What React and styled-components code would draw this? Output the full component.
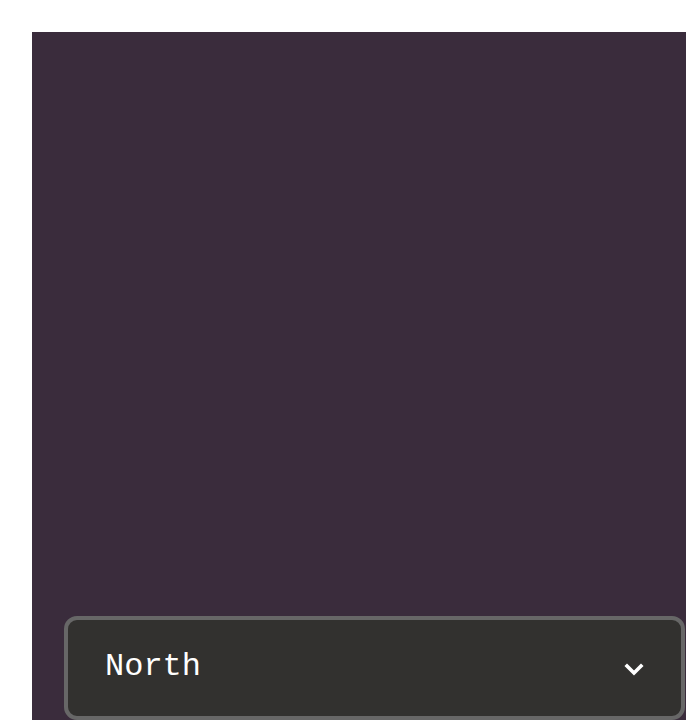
import React from "react";
import styled, { createGlobalStyle } from "styled-components";

const GlobalStyle = createGlobalStyle`
  html, body {
    margin: 0;
    padding: 0;
    background: #fff;
    overflow: hidden;
  }
`;

const Page = styled.div`
  padding: 32px 0 0 32px;
  width: 686px;
  height: 720px;
  box-sizing: border-box;
  overflow: hidden;
`;

const Panel = styled.div`
  width: 685px;
  height: 720px;
  box-sizing: border-box;
  padding: 32px;
  background: #3a2c3c;
  display: flex;
  flex-direction: column;
  justify-content: flex-end;
`;

const SelectBox = styled.div`
  height: 104px;
  box-sizing: border-box;
  border: 4px solid #676767;
  border-radius: 13px;
  background: #32312f;
  display: flex;
  align-items: center;
  justify-content: space-between;
  padding: 0 37px 0 37px;
  color: #fff;
  font-family: "Liberation Mono", "DejaVu Sans Mono", monospace;
  font-size: 32px;
  cursor: pointer;
`;

const Label = styled.span`
  line-height: 1;
  margin-top: -2px;
`;

const Chevron = () => (
  <svg width="20" height="14" viewBox="0 0 20 14" style={{ marginTop: 4 }}>
    <polyline
      points="3,3 10,10 17,3"
      fill="none"
      stroke="#fff"
      strokeWidth="3.6"
      strokeLinecap="square"
    />
  </svg>
);

export default function App() {
  return (
    <>
      <GlobalStyle />
      <Page>
        <Panel>
          <SelectBox>
            <Label>North</Label>
            <Chevron />
          </SelectBox>
        </Panel>
      </Page>
    </>
  );
}
